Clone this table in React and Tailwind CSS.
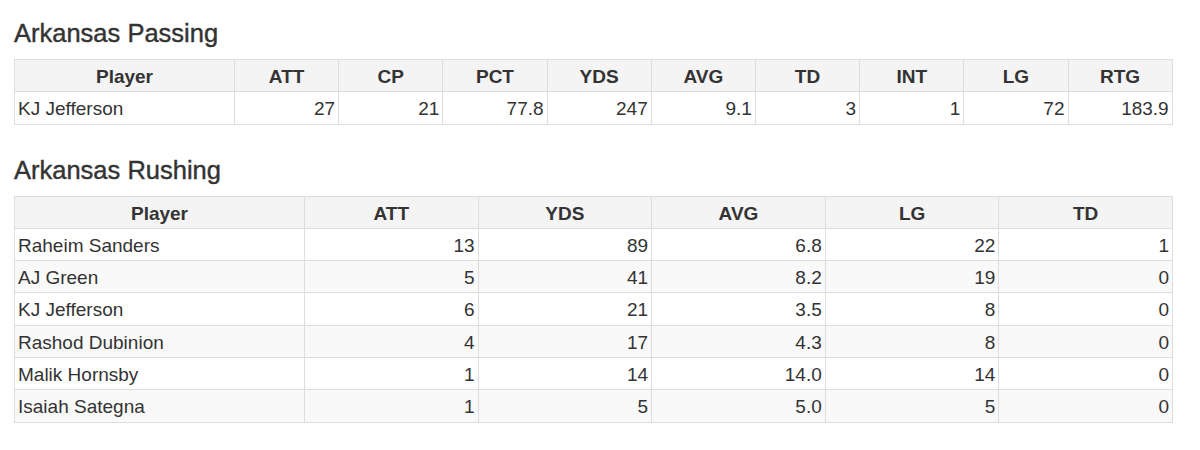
import React from "react";

const passing = {
  cols: ["Player", "ATT", "CP", "PCT", "YDS", "AVG", "TD", "INT", "LG", "RTG"],
  widths: ["w-[220px]", ...Array(9).fill("w-[104.2px]")],
  rows: [["KJ Jefferson", "27", "21", "77.8", "247", "9.1", "3", "1", "72", "183.9"]],
};

const rushing = {
  cols: ["Player", "ATT", "YDS", "AVG", "LG", "TD"],
  widths: ["w-[290px]", ...Array(5).fill("w-[173.6px]")],
  rows: [
    ["Raheim Sanders", "13", "89", "6.8", "22", "1"],
    ["AJ Green", "5", "41", "8.2", "19", "0"],
    ["KJ Jefferson", "6", "21", "3.5", "8", "0"],
    ["Rashod Dubinion", "4", "17", "4.3", "8", "0"],
    ["Malik Hornsby", "1", "14", "14.0", "14", "0"],
    ["Isaiah Sategna", "1", "5", "5.0", "5", "0"],
  ],
};

function StatTable({ title, data, className }) {
  return (
    <section className={className}>
      <h2 className="text-[25.5px] leading-[28px] font-normal text-[#333] [-webkit-text-stroke:0.4px_#333] mb-[12px]">
        {title}
      </h2>
      <table className="w-[1158px] table-fixed border-collapse border border-[#dddddd] text-[19px] leading-[24px] text-[#333]">
        <thead>
          <tr className="bg-[#f4f4f4]">
            {data.cols.map((c, i) => (
              <th
                key={c}
                className={`${data.widths[i]} px-[4px] pt-[5px] pb-[2.3px] border border-[#dddddd] font-bold text-center`}
              >
                {c}
              </th>
            ))}
          </tr>
        </thead>
        <tbody>
          {data.rows.map((r, ri) => (
            <tr key={ri} className={ri % 2 === 1 ? "bg-[#f9f9f9]" : "bg-white"}>
              {r.map((v, i) => (
                <td
                  key={i}
                  className={`px-[3px] pt-[5px] pb-[2.3px] border border-[#dddddd] ${
                    i === 0 ? "text-left" : "text-right"
                  }`}
                >
                  {v}
                </td>
              ))}
            </tr>
          ))}
        </tbody>
      </table>
    </section>
  );
}

export default function App() {
  return (
    <div className="w-[1200px] h-[450px] bg-white pl-[14px] pt-[19px] font-['Liberation_Sans',Arial,sans-serif]">
      <StatTable title="Arkansas Passing" data={passing} />
      <StatTable title="Arkansas Rushing" data={rushing} className="mt-[31px]" />
    </div>
  );
}
